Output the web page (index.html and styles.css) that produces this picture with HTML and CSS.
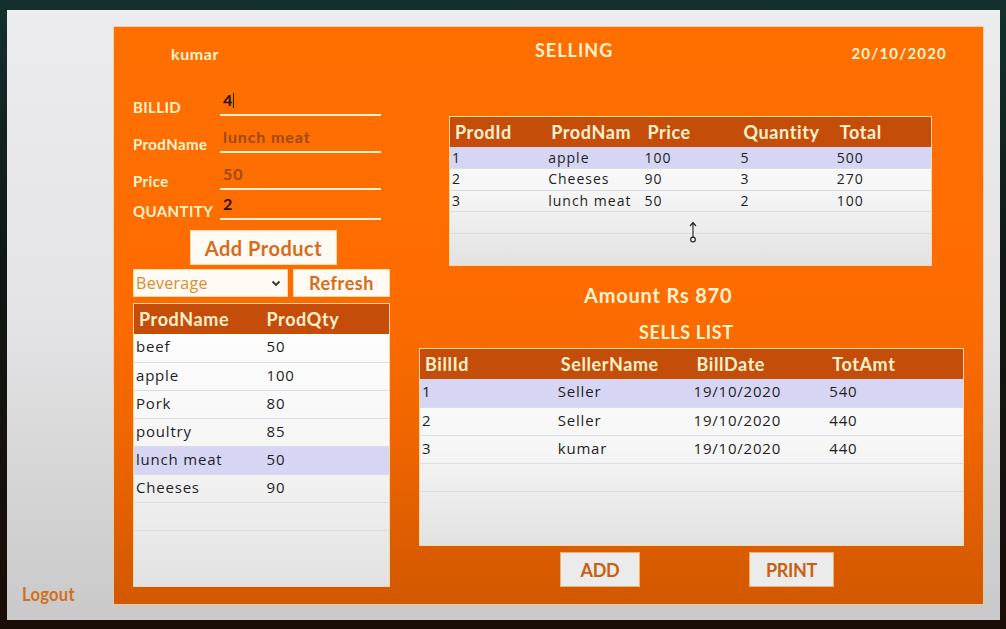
FILE: index.html
```html
<!DOCTYPE html>
<html>
<head>
<meta charset="utf-8">
<title>Selling</title>
<link rel="stylesheet" href="styles.css">
</head>
<body>
<div class="screen">
  <div class="window">
    <aside class="side">
      <a class="logout">Logout</a>
    </aside>
    <main class="panel">
      <header class="top">
        <span class="user">kumar</span>
        <h1 class="title">SELLING</h1>
        <span class="date">20/10/2020</span>
      </header>
      <div class="body">
        <section class="left">
          <div class="form">
            <div class="row"><span class="lbl">BILLID</span><div class="field val-dark">4<span class="caret"></span></div></div>
            <div class="row"><span class="lbl">ProdName</span><div class="field val-brown">lunch meat</div></div>
            <div class="row"><span class="lbl">Price</span><div class="field val-brown">50</div></div>
            <div class="row row-last"><span class="lbl">QUANTITY</span><div class="field val-dark">2</div></div>
          </div>
          <button class="btn btn-add">Add Product</button>
          <div class="filter">
            <div class="select"><span>Beverage</span>
              <svg width="10" height="7" viewBox="0 0 10 7"><path d="M1.5 1.5 L5 5 L8.5 1.5" fill="none" stroke="#333" stroke-width="1.8"/></svg>
            </div>
            <button class="btn btn-refresh">Refresh</button>
          </div>
          <div class="grid grid-stock">
            <table>
              <thead><tr><th>ProdName</th><th>ProdQty</th></tr></thead>
              <tbody>
                <tr><td>beef</td><td>50</td></tr>
                <tr><td>apple</td><td>100</td></tr>
                <tr><td>Pork</td><td>80</td></tr>
                <tr><td>poultry</td><td>85</td></tr>
                <tr class="sel"><td>lunch meat</td><td>50</td></tr>
                <tr><td>Cheeses</td><td>90</td></tr>
                <tr><td>&nbsp;</td><td></td></tr>
              </tbody>
            </table>
          </div>
        </section>
        <section class="right">
          <div class="grid grid-bill">
            <table>
              <thead><tr><th>ProdId</th><th>ProdNam</th><th>Price</th><th>Quantity</th><th>Total</th></tr></thead>
              <tbody>
                <tr class="sel"><td>1</td><td>apple</td><td>100</td><td>5</td><td>500</td></tr>
                <tr><td>2</td><td>Cheeses</td><td>90</td><td>3</td><td>270</td></tr>
                <tr><td>3</td><td>lunch meat</td><td>50</td><td>2</td><td>100</td></tr>
                <tr><td>&nbsp;</td><td></td><td></td><td></td><td></td></tr>
              </tbody>
            </table>
            <svg class="cursor" width="10" height="22" viewBox="0 0 10 22"><path d="M5 2 L5 17 M2 5 L5 1.5 L8 5" fill="none" stroke="#fff" stroke-width="3"/><path d="M5 2 L5 17 M2 5 L5 1.5 L8 5" fill="none" stroke="#222" stroke-width="1.2"/><circle cx="5" cy="18.5" r="2.3" fill="#fff" stroke="#222" stroke-width="1.2"/></svg>
          </div>
          <div class="amount">Amount Rs 870</div>
          <h2 class="sells">SELLS LIST</h2>
          <div class="grid grid-sells">
            <table>
              <thead><tr><th>BillId</th><th>SellerName</th><th>BillDate</th><th>TotAmt</th></tr></thead>
              <tbody>
                <tr class="sel"><td>1</td><td>Seller</td><td>19/10/2020</td><td>540</td></tr>
                <tr><td>2</td><td>Seller</td><td>19/10/2020</td><td>440</td></tr>
                <tr><td>3</td><td>kumar</td><td>19/10/2020</td><td>440</td></tr>
                <tr><td>&nbsp;</td><td></td><td></td><td></td></tr>
              </tbody>
            </table>
          </div>
          <div class="actions">
            <button class="btn btn-small btn-addbill">ADD</button>
            <button class="btn btn-small btn-print">PRINT</button>
          </div>
        </section>
      </div>
    </main>
  </div>
</div>
</body>
</html>
```

FILE: styles.css
```css
* { box-sizing: border-box; }
html, body { margin: 0; padding: 0; }
body {
  width: 1006px;
  height: 629px;
  overflow: hidden;
  background: linear-gradient(180deg, #14302e 0%, #101816 40%, #1a0d08 100%);
  font-family: "Lato", "Open Sans", sans-serif;
}
.screen {
  padding: 10px 6px 9px 7px;
}
.window {
  width: 993px;
  height: 610px;
  background: linear-gradient(180deg, #ececee 0%, #e4e4e6 50%, #c9c9c9 100%);
  display: flex;
  padding: 17px 17px 16px 0;
}
.side {
  width: 107px;
  display: flex;
  flex-direction: column;
  justify-content: flex-end;
  padding: 0 0 0 15px;
}
.logout {
  color: #d0701e;
  font-weight: 700;
  font-size: 18px;
  letter-spacing: 0.3px;
  line-height: 20px;
  transform: scaleX(0.92);
  transform-origin: left center;
  margin-bottom: 0;
}
.panel {
  width: 869px;
  height: 577px;
  background: linear-gradient(180deg, #ff6f00 0%, #fe6c00 45%, #f06600 70%, #d25800 100%);
  box-shadow: 0 0 0 1px rgba(255, 196, 130, 0.7);
  padding: 0 18px 0 19px;
  color: #fff2cf;
}
.top {
  height: 52px;
  display: flex;
  align-items: center;
  padding-left: 38px;
  padding-right: 18px;
}
.user {
  font-weight: 700;
  font-size: 16px;
  letter-spacing: 0.6px;
  width: 364px;
}
.title {
  margin: 0 0 6px 0;
  font-size: 18px;
  font-weight: 700;
  letter-spacing: 1px;
}
.date {
  margin-left: auto;
  font-weight: 700;
  font-size: 15px;
  letter-spacing: 1.2px;
}
.body {
  display: flex;
  gap: 29px;
}
.left {
  width: 257px;
  display: flex;
  flex-direction: column;
  padding-top: 13px;
}
.right {
  width: 545px;
  display: flex;
  flex-direction: column;
}
.form {
  display: flex;
  flex-direction: column;
  gap: 13px;
}
.row {
  height: 24px;
  display: flex;
  align-items: flex-end;
}
.row-last { margin-top: -7px; }
.lbl {
  width: 87px;
  font-weight: 700;
  font-size: 15px;
  line-height: 18px;
  letter-spacing: 0.4px;
  white-space: nowrap;
}
.field {
  width: 161px;
  height: 24px;
  border-bottom: 2px solid #fff2cf;
  font-size: 16px;
  line-height: 16px;
  padding: 0 0 6px 3px;
  display: flex;
  align-items: flex-end;
  font-weight: 700;
}
.val-dark { color: #2a1000; }
.val-brown { color: #9c4a0c; letter-spacing: 0.9px; }
.caret {
  display: inline-block;
  width: 1px;
  height: 15px;
  background: #222;
  margin-left: 1px;
}
.btn {
  font-family: "Lato", "Open Sans", sans-serif;
  font-weight: 700;
  border: 1px solid #ffd9a8;
  background: #fffaf3;
  color: #d86c18;
  padding: 0;
  cursor: pointer;
}
.btn-add {
  margin: 10px 0 0 57px;
  width: 147px;
  height: 35px;
  font-size: 20px;
  letter-spacing: 0.5px;
}
.filter {
  margin-top: 4px;
  height: 28px;
  display: flex;
  gap: 5px;
}
.select {
  width: 155px;
  height: 28px;
  background: #fffaf3;
  border: 1px solid #ffd9a8;
  display: flex;
  align-items: center;
  justify-content: space-between;
  padding: 0 6px 0 2px;
  color: #e08a2e;
  font-size: 16px;
  letter-spacing: 0.3px;
  font-family: "Open Sans", sans-serif;
}
.btn-refresh {
  width: 97px;
  height: 28px;
  font-size: 18px;
  letter-spacing: 0.6px;
}
.grid {
  position: relative;
  background: linear-gradient(180deg, #ffffff 0%, #f6f6f6 50%, #e2e2e2 100%);
  border: 1px solid #ffd8a0;
  overflow: hidden;
}
.grid table {
  width: 100%;
  border-collapse: collapse;
  table-layout: fixed;
}
.grid th {
  background: #c44d0a;
  color: #fff0cc;
  text-align: left;
  font-weight: 700;
  font-size: 18px;
  letter-spacing: 0.6px;
  height: 30px;
  padding: 0 0 0 5px;
  white-space: nowrap;
}
.grid td {
  font-family: "Open Sans", sans-serif;
  font-size: 15px;
  letter-spacing: 0.8px;
  color: #1e1e24;
  height: 28px;
  padding: 0 0 3px 2px;
  border-bottom: 1px solid #dcdce8;
  white-space: nowrap;
}
.grid tr.sel td { background: #d6d6f4; }
.grid-stock {
  margin-top: 6px;
  height: 284px;
}
.grid-stock td:nth-child(2) { padding-left: 5px; }
.grid-bill {
  margin: 37px 32px 0 30px;
  height: 150px;
}
.grid-bill td {
  height: 21.5px;
  font-size: 14px;
  letter-spacing: 1px;
  padding-bottom: 1px;
}
.cursor {
  position: absolute;
  left: 238px;
  top: 104px;
}
.amount {
  margin: 17px 0 0 165px;
  font-weight: 700;
  font-size: 20px;
  letter-spacing: 0.8px;
  line-height: 24px;
}
.sells {
  margin: 14px 0 0 220px;
  font-size: 18px;
  letter-spacing: 0.6px;
  line-height: 22px;
  font-weight: 700;
}
.grid-sells {
  margin-top: 5px;
  height: 198px;
}
.actions {
  margin-top: 6px;
  display: flex;
  padding-left: 141px;
  gap: 109px;
}
.btn-small {
  height: 35px;
  background: #ebebeb;
  border: 1px solid #f0b070;
  color: #c8600f;
  font-size: 18px;
  letter-spacing: -0.3px;
}
.btn-addbill { width: 80px; }
.btn-print { width: 85px; }
```
